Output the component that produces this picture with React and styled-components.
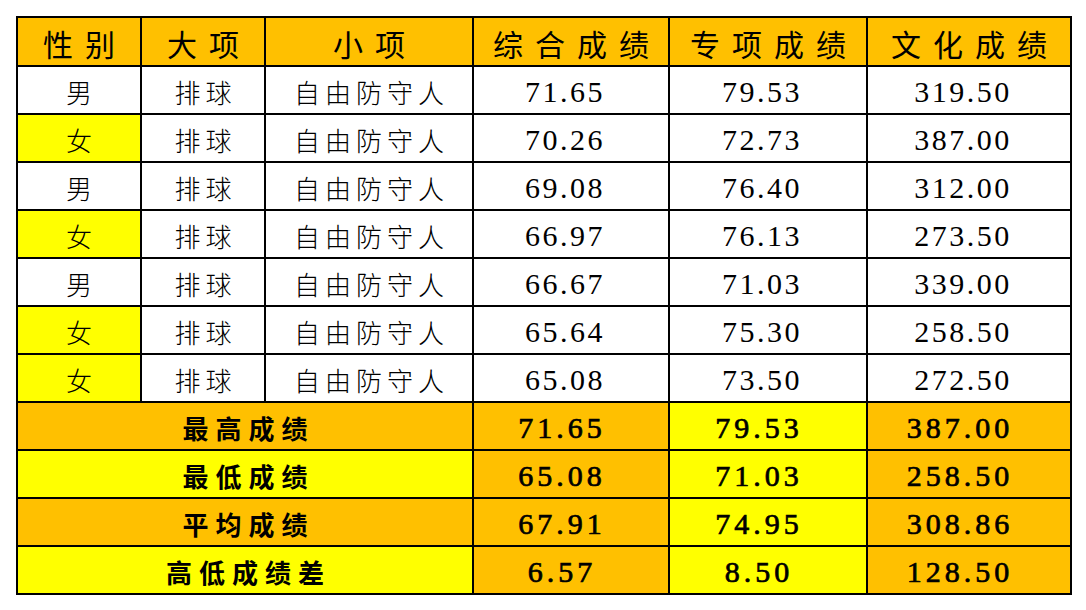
import React from "react"
import styled, { createGlobalStyle } from "styled-components"

const ORANGE = "#FFC000"
const YELLOW = "#FFFF00"

const GlobalStyle = createGlobalStyle`
  html, body {
    margin: 0;
    padding: 0;
    background: #ffffff;
  }
`

const Page = styled.div`
  padding: 16px 0 0 16px;
`

const Sheet = styled.table`
  border-collapse: collapse;
  table-layout: fixed;
  width: 1054px;
  color: #000;
  font-family: "Noto Sans CJK SC", sans-serif;
`

const HeadRow = styled.tr`
  height: 49px;
  background: ${ORANGE};
`

const Row = styled.tr`
  height: 48px;
`

const cellBase = `
  border: 2px solid #000;
  padding: 3px 0 0 0;
  text-align: center;
  vertical-align: middle;
  white-space: nowrap;
  overflow: hidden;
  line-height: 1;
`

const HeadCell = styled.th`
  ${cellBase}
  padding-top: 2px;
  padding-left: 12px;
  font-size: 30px;
  font-weight: 400;
  letter-spacing: 12px;
`

const TextCell = styled.td`
  ${cellBase}
  padding-left: 5px;
  font-size: 26px;
  font-weight: 300;
  letter-spacing: 5px;
  background: ${({ $female }) => ($female ? YELLOW : "#fff")};
`

const NumCell = styled.td`
  ${cellBase}
  padding-right: 12px;
  font-family: "Liberation Serif", "Times New Roman", serif;
  font-size: 30px;
  letter-spacing: 2.5px;
  background: #fff;
`

const SummaryLabel = styled.td`
  ${cellBase}
  padding-left: 7px;
  font-size: 26px;
  font-weight: 700;
  letter-spacing: 7px;
  background: ${({ $tone }) => ($tone === "yellow" ? YELLOW : ORANGE)};
`

const SummaryValue = styled.td`
  ${cellBase}
  padding-right: 18px;
  font-family: "Liberation Serif", "Times New Roman", serif;
  font-size: 30px;
  font-weight: 400;
  -webkit-text-stroke: 0.7px #000;
  letter-spacing: 4px;
  background: ${({ $tone }) => ($tone === "yellow" ? YELLOW : ORANGE)};
`

const columns = [124, 124, 208, 196, 198, 204]
const headers = ["性别", "大项", "小项", "综合成绩", "专项成绩", "文化成绩"]

const rows = [
  ["男", "71.65", "79.53", "319.50"],
  ["女", "70.26", "72.73", "387.00"],
  ["男", "69.08", "76.40", "312.00"],
  ["女", "66.97", "76.13", "273.50"],
  ["男", "66.67", "71.03", "339.00"],
  ["女", "65.64", "75.30", "258.50"],
  ["女", "65.08", "73.50", "272.50"],
]

const summary = [
  { label: "最高成绩", tone: "orange", values: ["71.65", "79.53", "387.00"] },
  { label: "最低成绩", tone: "yellow", values: ["65.08", "71.03", "258.50"] },
  { label: "平均成绩", tone: "orange", values: ["67.91", "74.95", "308.86"] },
  { label: "高低成绩差", tone: "yellow", values: ["6.57", "8.50", "128.50"] },
]

// value columns keep their own colour in the summary block
const valueTones = ["orange", "yellow", "orange"]

export default function App() {
  return (
    <Page>
      <GlobalStyle />
      <Sheet>
        <colgroup>
          {columns.map((w, i) => (
            <col key={i} style={{ width: w }} />
          ))}
        </colgroup>
        <thead>
          <HeadRow>
            {headers.map((h) => (
              <HeadCell key={h}>{h}</HeadCell>
            ))}
          </HeadRow>
        </thead>
        <tbody>
          {rows.map(([gender, total, special, culture], i) => (
            <Row key={i}>
              <TextCell $female={gender === "女"}>{gender}</TextCell>
              <TextCell>排球</TextCell>
              <TextCell>自由防守人</TextCell>
              <NumCell>{total}</NumCell>
              <NumCell>{special}</NumCell>
              <NumCell>{culture}</NumCell>
            </Row>
          ))}
          {summary.map((s) => (
            <Row key={s.label}>
              <SummaryLabel colSpan={3} $tone={s.tone}>
                {s.label}
              </SummaryLabel>
              {s.values.map((v, j) => (
                <SummaryValue key={j} $tone={valueTones[j]}>
                  {v}
                </SummaryValue>
              ))}
            </Row>
          ))}
        </tbody>
      </Sheet>
    </Page>
  )
}
